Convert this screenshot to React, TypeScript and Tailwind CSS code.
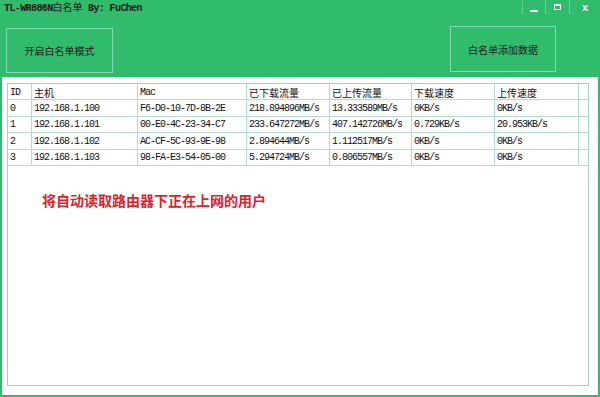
import React from 'react';

const mono = { fontFamily: '"Liberation Mono", "Noto Sans CJK SC", monospace' };
const cjk = { fontFamily: '"Noto Sans CJK SC", "Liberation Sans", sans-serif' };

const cols = ['w-[24px]', 'w-[106px]', 'w-[109px]', 'w-[83px]', 'w-[82px]', 'w-[83px]', 'w-[84px]'];

const headers = ['ID', '主机', 'Mac', '已下载流量', '已上传流量', '下载速度', '上传速度'];

const rows = [
  ['0', '192.168.1.100', 'F6-D0-10-7D-8B-2E', '218.894896MB/s', '13.333589MB/s', '0KB/s', '0KB/s'],
  ['1', '192.168.1.101', '00-E0-4C-23-34-C7', '233.647272MB/s', '407.142726MB/s', '0.729KB/s', '20.953KB/s'],
  ['2', '192.168.1.102', 'AC-CF-5C-93-9E-98', '2.894644MB/s', '1.112517MB/s', '0KB/s', '0KB/s'],
  ['3', '192.168.1.103', '98-FA-E3-54-05-00', '5.294724MB/s', '0.806557MB/s', '0KB/s', '0KB/s'],
];

function Cell({ i, text }: { i: number; text: string }) {
  const isAscii = /^[\x00-\x7f]+$/.test(text);
  return (
    <div
      className={`${cols[i]} shrink-0 h-full flex items-center pl-[2px] border-r border-[#b3dcd8] overflow-hidden whitespace-nowrap text-[#111] ${
        isAscii ? 'text-[10px] tracking-[-1px] pt-[1px]' : 'text-[10px] pt-[1px]'
      }`}
      style={isAscii ? mono : cjk}
    >
      {text}
    </div>
  );
}

export default function App() {
  return (
    <div className="w-[600px] h-[397px] bg-[#30bc6c] flex flex-col overflow-hidden">
      <div className="h-[26px] flex items-start justify-between">
        <div className="pl-[4px] pt-[1px] text-[10px] leading-[12px] tracking-[-0.6px] font-semibold text-[#1a1a1a] whitespace-nowrap" style={mono}>
          TL-WR886N<span style={cjk} className="tracking-normal font-normal">白名单</span> By: FuChen
        </div>
        <div className="flex h-[14px] text-white">
          <div className="w-[23px] border-l border-[#5fd090] flex items-end justify-center pb-[2px]">
            <div className="w-[8px] h-[2px] bg-white" />
          </div>
          <div className="w-[24px] border-l border-[#5fd090] flex items-center justify-center">
            <div className="w-[7px] h-[6px] border border-white border-t-2" />
          </div>
          <div className="w-[31px] border-l border-[#5fd090] flex items-center justify-center text-[11px] font-bold leading-none" style={{ fontFamily: '"Liberation Sans", sans-serif' }}>
            x
          </div>
        </div>
      </div>
      <div className="h-[51px] flex justify-between items-start">
        <button className="ml-[6px] mt-[2px] w-[107px] h-[45px] border border-[#7edcaa] text-[10px] text-[#1a1a1a] flex items-center justify-center" style={cjk}>
          开启白名单模式
        </button>
        <button className="mr-[44px] w-[106px] h-[46px] border border-[#7edcaa] text-[10px] text-[#1a1a1a] flex items-center justify-center" style={cjk}>
          白名单添加数据
        </button>
      </div>
      <div className="flex-1 mx-[2px] mb-[2px] bg-white pl-[5px] pt-[6px] pr-[9px] pb-[9px] flex">
        <div className="flex-1 border border-[#a9d0c8] flex flex-col">
          <div className="h-[16px] flex border-b border-[#b3dcd8]">
            {headers.map((h, i) => (
              <Cell key={i} i={i} text={h} />
            ))}
          </div>
          {rows.map((r, ri) => (
            <div key={ri} className="h-[16.5px] flex border-b border-[#b3dcd8]">
              {r.map((c, i) => (
                <Cell key={i} i={i} text={c} />
              ))}
            </div>
          ))}
          <div className="pl-[34px] pt-[26px] text-[14px] font-bold text-[#e0202a] leading-[16px]" style={cjk}>
            将自动读取路由器下正在上网的用户
          </div>
        </div>
      </div>
    </div>
  );
}
